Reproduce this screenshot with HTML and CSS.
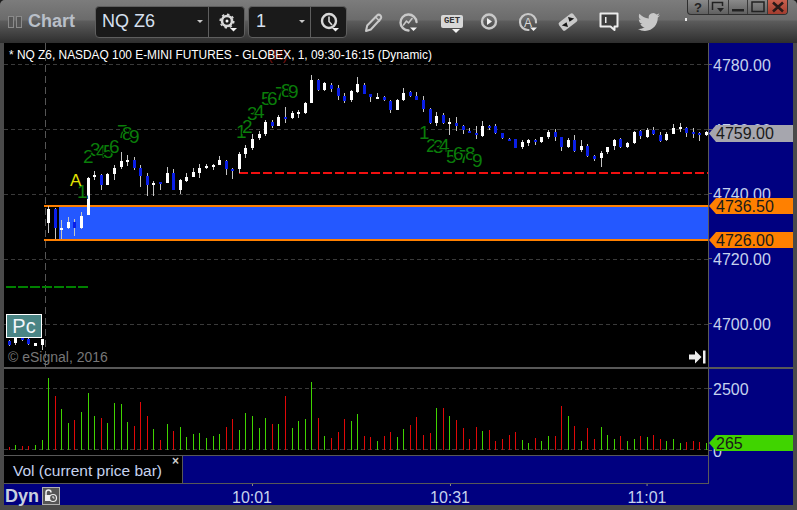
FILE: index.html
```html
<!DOCTYPE html>
<html lang="en">
<head>
<meta charset="utf-8">
<title>Chart</title>
<link rel="stylesheet" href="styles.css">
</head>
<body>
<div class="window">
  <header class="toolbar">
    <span class="grip"><i></i><i></i></span>
    <span class="app-title">Chart</span>
    <div class="combo combo-symbol">
      <span class="combo-value">NQ Z6</span><span class="caret"></span>
      <span class="combo-btn">
        <svg width="24" height="24" viewBox="0 0 24 24"><circle class="ico-ring" cx="12" cy="11" r="5" stroke-width="2.600"/><circle class="ico-ring" cx="12" cy="11" r="6.800" stroke-width="1.500" stroke-dasharray="2.500 2.800"/><circle class="ico-fill" cx="12" cy="11" r="1.500"/><path class="ico-fill" d="M15 18h7l-3.500 3.500z"/></svg>
      </span>
    </div>
    <div class="combo combo-interval">
      <span class="combo-value">1</span><span class="caret"></span>
      <span class="combo-btn">
        <svg width="24" height="24" viewBox="0 0 24 24"><circle class="ico-ring" cx="12" cy="11" r="7" stroke-width="2.400"/><path class="ico-ring" d="M12 6.500V11.500L15 15" stroke-width="1.600"/><path class="ico-fill" d="M15 18h7l-3.500 3.500z"/></svg>
      </span>
    </div>
    <span class="tool t-pencil"><svg width="24" height="24" viewBox="0 0 24 24"><path class="ico-line" d="M5 21l1.200-5.500L16 5.500c1-1 2.500-1 3.500 0s1 2.500 0 3.500L9.800 19.500z" stroke-width="2"/><path class="ico-line" d="M14.500 7l4 4" stroke-width="1.500"/></svg></span>
    <span class="tool t-line"><svg width="24" height="24" viewBox="0 0 24 24"><path class="ico-line" d="M12.500 20.500A8 8 0 1 1 20.500 12" stroke-width="2.400"/><path class="ico-line" d="M7.500 15l3-4 2 2 3.500-4.500" stroke-width="1.600"/><path class="ico-fill" d="M14 17.500h7l-3.500 3.500z"/></svg></span>
    <span class="tool t-get"><span class="get-badge">GET</span><svg class="get-caret" width="8" height="4" viewBox="0 0 8 4"><path class="ico-fill" d="M0 0h8l-4 4z"/></svg></span>
    <span class="tool t-play"><svg width="24" height="24" viewBox="0 0 24 24"><circle class="ico-line" cx="12" cy="11.500" r="7" stroke-width="2.400"/><path class="ico-fill" d="M10 8l5 3.500-5 3.500z"/></svg></span>
    <span class="tool t-auto"><svg width="24" height="24" viewBox="0 0 24 24"><path class="ico-line" d="M12.500 20A8 8 0 1 1 20 12.500" stroke-width="2.200"/><text class="ico-a" x="12" y="16.500">A</text><path class="ico-fill" d="M14 17.500h7l-3.500 3.500z"/></svg></span>
    <span class="tool t-link"><svg width="24" height="24" viewBox="0 0 24 24"><rect class="ico-plate" x="3" y="7" width="18" height="10" rx="2" transform="rotate(-38 12 12)"/><path class="ico-dark" d="M5.800 15.500l4.700-3.300 1.500 4.800zM18.200 8.500l-4.700 3.300-1.500-4.800z"/></svg></span>
    <span class="tool t-note"><svg width="24" height="24" viewBox="0 0 24 24"><path class="ico-bubble" d="M3.500 3.500h17v13h-3v3.500l-4-3.500h-10z"/><rect class="ico-bar" x="8" y="7" width="1.500" height="6"/></svg></span>
    <span class="tool t-bird"><svg width="24" height="24" viewBox="0 0 24 24"><path class="ico-bird" d="M23.950 4.570a10 10 0 0 1-2.820.770 4.960 4.960 0 0 0 2.160-2.720c-.95.560-2 .960-3.120 1.180a4.920 4.920 0 0 0-8.380 4.480C7.690 8.100 4.070 6.130 1.640 3.160a4.820 4.820 0 0 0-.670 2.480c0 1.710.870 3.210 2.190 4.100a4.900 4.900 0 0 1-2.230-.620v.060c0 2.390 1.700 4.380 3.950 4.830a5 5 0 0 1-2.210.080 4.940 4.940 0 0 0 4.600 3.420A9.870 9.870 0 0 1 0 19.540a13.940 13.940 0 0 0 7.550 2.210c9.060 0 14-7.500 14-13.980 0-.210 0-.420-.020-.630a9.940 9.940 0 0 0 2.460-2.550z"/></svg></span>
    <span class="dot"></span>
    <div class="win-btns">
      <span class="win-btn win-help">?</span>
      <span class="win-btn"><svg width="14" height="12" viewBox="0 0 14 12"><path class="win-stroke" d="M1.500 9V1.500H11.500V5" stroke-width="1.500"/><path class="win-fill" d="M6 7h7l-3.500 4z"/></svg></span>
      <span class="win-btn"><svg width="14" height="12" viewBox="0 0 14 12"><rect class="win-fill" x="1" y="8" width="12" height="2.500"/></svg></span>
      <span class="win-btn"><svg width="14" height="12" viewBox="0 0 14 12"><rect class="win-stroke" x="1" y="1" width="12" height="9.500" stroke-width="1.500"/></svg></span>
      <span class="win-btn win-close"><svg width="14" height="12" viewBox="0 0 14 12"><path class="win-x" d="M2 1.500L12 10.500M12 1.500L2 10.500" stroke-width="2.600"/></svg></span>
    </div>
  </header>

  <main class="workspace">
    <section class="row row-price">
      <div class="pane">
        <svg id="priceChart" class="chart" width="704" height="324" viewBox="4 43 704 324"></svg>
        <span class="chart-note">(R)</span>
        <span class="chart-title">* NQ Z6, NASDAQ 100 E-MINI FUTURES - GLOBEX, 1, 09:30-16:15 (Dynamic)</span>
        <span class="pc-badge">Pc</span>
        <span class="copyright">© eSignal, 2016</span>
        <svg class="scroll-end" width="17" height="14" viewBox="0 0 17 14"><path class="ico-arrow" d="M0 4.500h6V0.500l6.500 6.500L6 13.500V9.500H0z"/><rect class="ico-arrow" x="14" y="0.500" width="2.500" height="13"/></svg>
      </div>
      <div class="axis">
        <span class="tick p4780">4780.00</span>
        <span class="tick p4760">4760.00</span>
        <span class="tick p4740">4740.00</span>
        <span class="tick p4720">4720.00</span>
        <span class="tick p4700">4700.00</span>
        <span class="tag tag-last">4759.00</span>
        <span class="tag tag-hi">4736.50</span>
        <span class="tag tag-lo">4726.00</span>
      </div>
    </section>
    <div class="divider"></div>
    <section class="row row-vol">
      <div class="pane">
        <svg id="volChart" class="chart" width="704" height="86" viewBox="4 369 704 86"></svg>
      </div>
      <div class="axis">
        <span class="tick v2500">2500</span>
        <span class="tick v0">0</span>
        <span class="tag tag-vol">265</span>
      </div>
    </section>
    <section class="legend-row">
      <div class="legend">
        <span class="legend-text">Vol (current price bar)</span>
        <span class="legend-close">×</span>
      </div>
      <div class="legend-fill"></div>
    </section>
    <section class="time-row">
      <div class="time-axis">
        <span class="dyn">Dyn</span>
        <span class="lock"><svg width="18" height="18" viewBox="0 0 18 18"><rect class="lock-box" x="0.500" y="0.500" width="17" height="17"/><path class="lock-arch" d="M4 8V5.500a2.500 2.500 0 0 1 5 0" stroke-width="1.500"/><rect class="lock-body" x="3" y="8" width="6" height="6"/><circle class="lock-clock" cx="11" cy="11" r="3.500" stroke-width="1.200"/><path class="lock-hand" d="M11 9v2h1.500" stroke-width="1"/></svg></span>
        <span class="time t1001">10:01</span>
        <span class="time t1031">10:31</span>
        <span class="time t1101">11:01</span>
      </div>
    </section>
  </main>
</div>
<script src="chart.js"></script>
</body>
</html>
```

FILE: styles.css
```css
* { box-sizing: border-box; }
html, body { margin: 0; padding: 0; background: #1c1c1c; }
body { width: 797px; height: 510px; overflow: hidden; font-family: "Liberation Sans", Arial, sans-serif; }

.window { width: 797px; height: 510px; display: flex; flex-direction: column; background: #4a4a4a; border-radius: 5px 5px 0 0; overflow: hidden; }

/* toolbar */
.toolbar { position: relative; height: 43px; flex: none; display: flex; align-items: center; background: linear-gradient(#7c7c7c 0, #6b6b6b 20px, #5c5c5c 21px, #2e2e2e 43px); }
.grip { display: flex; gap: 2px; margin-left: 8px; }
.grip i { display: block; width: 6px; height: 12px; border: 1px solid #8a8a8a; background: #555; }
.app-title { margin-left: 6px; width: 67px; font-size: 18px; font-weight: bold; color: #b9bfc8; }
.combo { height: 32px; display: flex; align-items: center; background: #1a1a1a; border: 1px solid #5e5e5e; border-radius: 4px; color: #d6e0f0; }
.combo-symbol { width: 150px; }
.combo-interval { width: 99px; margin-left: 3px; }
.combo-value { margin-left: 6px; font-size: 18px; flex: 1; }
.combo-interval .combo-value { margin-left: 7px; }
.caret { width: 0; height: 0; margin-right: 5px; border-left: 3px solid transparent; border-right: 3px solid transparent; border-top: 3px solid #c8c8c8; }
.combo-btn { width: 36px; height: 30px; display: flex; align-items: center; justify-content: center; border-left: 1px solid #5e5e5e; }
.tool { position: relative; width: 24px; height: 24px; flex: none; display: flex; align-items: center; justify-content: center; }
.t-pencil { margin-left: 14px; }
.t-line { margin-left: 11px; }
.t-get { margin-left: 20px; flex-direction: column; }
.t-play { margin-left: 13px; }
.t-auto { margin-left: 15px; }
.t-link { margin-left: 16px; }
.t-note { margin-left: 17px; }
.t-bird { margin-left: 16px; }
.get-badge { width: 22px; height: 13px; background: #d8d8d8; border-radius: 2px; color: #333; font: bold 9px/13px "Liberation Mono", monospace; text-align: center; }
.get-caret { display: block; margin: 1px 0 -5px 8px; }
.ico-ring, .ico-line { fill: none; stroke: #d8d8d8; }
.ico-line { stroke: #c9c9c9; stroke-linecap: round; stroke-linejoin: round; }
.ico-fill { fill: #f2f2f2; }
.ico-a { fill: #d8d8d8; font-size: 12px; text-anchor: middle; }
.ico-plate { fill: #c9c9c9; }
.ico-dark { fill: #151515; }
.ico-bubble { fill: #3e3e3e; stroke: #ececec; stroke-width: 2; stroke-linejoin: round; }
.ico-bar { fill: #ececec; }
.ico-bird { fill: #c8c8c8; transform: scale(0.92); transform-origin: center; }
.dot { position: absolute; left: 685px; top: 18px; width: 2px; height: 3px; background: #eee; }
.win-btns { position: absolute; top: 0; left: 687px; width: 101px; height: 15px; display: flex; border: 1px solid #2e2e2e; border-top: 0; border-radius: 0 0 4px 4px; overflow: hidden; background: linear-gradient(#8a8a8a, #606060); }
.win-btn { width: 20px; display: flex; align-items: center; justify-content: center; border-left: 1px solid #3a3a3a; font-size: 13px; font-weight: bold; color: #222; }
.win-btn:first-child { border-left: 0; }
.win-close { background: linear-gradient(#c9604e, #a23c2e); }
.win-stroke { fill: none; stroke: #222; }
.win-fill { fill: #222; }
.win-x { stroke: #2a1a18; fill: none; }

/* workspace */
.workspace { flex: none; height: 462px; margin: 0 4px; background: #000080; display: flex; flex-direction: column; }
.row { display: flex; flex: none; }
.row-price { height: 324px; }
.row-vol { height: 86px; }
.pane { position: relative; width: 704px; flex: none; background: #000; }
.chart { display: block; shape-rendering: crispEdges; }
.axis { position: relative; flex: 1; border-left: 1px solid #5a5a5a; color: #c6d2ee; font-size: 16px; line-height: 18px; }
.divider { height: 2px; flex: none; background: #585858; }

.chart-title { position: absolute; left: 5px; top: 5px; font-size: 11.900px; line-height: 15px; color: #fff; white-space: nowrap; }
.chart-note { position: absolute; left: 264px; top: 4px; font-size: 14px; line-height: 16px; color: #7a1010; }
.pc-badge { position: absolute; left: 2px; top: 271px; width: 36px; height: 24px; background: #4a8585; border: 1px solid #fff; color: #f2f6fa; font-size: 20px; line-height: 22px; text-align: center; }
.copyright { position: absolute; left: 4px; top: 306px; font-size: 14px; line-height: 16px; color: #777; }
.scroll-end { position: absolute; left: 685px; top: 307px; }
.ico-arrow { fill: #eee; }

.tick { position: absolute; left: 4px; white-space: nowrap; }
.tick::before { content: ""; position: absolute; left: -4px; top: 7px; width: 3px; height: 1px; background: #666; }
.p4780 { top: 14px; }
.p4760 { top: 79px; }
.p4740 { top: 143px; }
.p4720 { top: 208px; }
.p4700 { top: 273px; }
.v2500 { top: 12px; }
.v0 { top: 74px; }
.tag { position: absolute; left: 0; width: 84px; height: 16px; padding-left: 7px; line-height: 18px; color: #1a1a1a; clip-path: polygon(0 50%, 7px 0, 100% 0, 100% 100%, 7px 100%); }
.tag-last { top: 82px; height: 17px; background: #a6a6ae; }
.tag-hi { top: 155px; background: #ff8000; }
.tag-lo { top: 189px; background: #ff8000; }
.tag-vol { top: 66px; background: #40d400; }

/* legend and time */
.legend-row { display: flex; flex: none; height: 29px; width: 705px; border-top: 1px solid #585858; border-bottom: 1px solid #585858; border-right: 1px solid #5a5a5a; }
.legend { width: 178px; flex: none; display: flex; justify-content: space-between; background: #000; color: #c6d2ee; }
.legend-text { margin: 6px 0 0 9px; font-size: 15.500px; line-height: 18px; white-space: nowrap; }
.legend-close { margin: 0 3px 0 0; font-size: 12px; font-weight: bold; line-height: 11px; color: #ccc; }
.legend-fill { flex: 1; border-left: 1px solid #585858; }
.time-row { flex: 1; display: flex; }
.time-axis { position: relative; width: 704px; display: flex; align-items: center; color: #c6d2ee; }
.dyn { margin: 2px 0 0 1px; font-size: 18px; font-weight: bold; color: #c8d0de; }
.lock { margin-left: 3px; height: 18px; display: block; }
.lock-box { fill: #555; stroke: #b0b0b0; }
.lock-arch { fill: none; stroke: #eee; }
.lock-body { fill: #eee; }
.lock-clock { fill: #555; stroke: #eee; }
.lock-hand { fill: none; stroke: #eee; }
.time { position: absolute; top: 5px; font-size: 16px; line-height: 18px; transform: translateX(-50%); }
.time::before { content: ""; position: absolute; left: 50%; top: -5px; width: 1px; height: 2px; background: #888; }
.t1001 { left: 248px; }
.t1031 { left: 446px; }
.t1101 { left: 643px; }

/* chart drawing */
.grid { stroke: #3a3a3a; stroke-width: 1; stroke-dasharray: 4 3; fill: none; }
.vgrid { stroke: #555; stroke-width: 1; stroke-dasharray: 7 4; fill: none; }
.band { fill: #2458ff; }
.band-edge { fill: #ff8000; }
.red-dash { stroke: #f01010; stroke-width: 2; stroke-dasharray: 9 3; fill: none; }
.green-dash { stroke: #008000; stroke-width: 2; stroke-dasharray: 10 2; fill: none; }
.wick { fill: #c4c4c4; }
.up { fill: #fff; }
.down { fill: #0a1ee6; }
.vol-up { fill: #40d400; }
.vol-down { fill: #e00808; }
.td { fill: #0a7d0a; font-size: 19px; shape-rendering: auto; paint-order: stroke; stroke: #000; stroke-width: 2px; }
.sig { fill: #e2e200; font-size: 17px; stroke: none; }
```

FILE: chart.js
```js
var NS = "http://www.w3.org/2000/svg";
function el(parent, name, attrs, text) {
  var n = document.createElementNS(NS, name);
  for (var k in attrs) n.setAttribute(k, attrs[k]);
  if (text) n.textContent = text;
  parent.appendChild(n);
  return n;
}
function barX(i) { return Math.floor(9.2 + 6.577 * i); }

// wick top, body top, body bottom, wick bottom, 1 = white / 0 = blue
var bars = [
[340,341,345,346,0],[334,336,343,345,1],[335,336,340,341,0],[338,339,344,345,0],[343,343,346,346,1],[339,339,345,350,1],
[206,209,223,233,1],[208,209,228,239,0],[220,228,230,239,1],[217,222,228,229,1],[219,222,228,236,0],[212,216,228,229,1],
[177,178,215,215,1],[171,175,177,180,1],[174,175,185,190,0],[173,174,185,185,1],[165,168,174,180,1],[152,161,167,169,1],
[155,160,162,166,1],[157,160,168,170,0],[165,168,176,187,0],[173,176,185,196,0],[181,183,185,196,1],[182,182,184,190,0],
[167,173,183,183,1],[169,173,190,190,0],[179,180,190,194,1],[173,177,181,182,1],[168,172,177,177,1],[164,168,173,178,1],
[164,166,168,169,1],[164,165,167,170,1],[156,160,165,165,1],[160,161,169,175,0],[168,169,171,179,0],[152,154,169,173,1],
[145,148,154,158,1],[134,139,148,150,1],[131,134,138,140,1],[120,122,134,136,1],[120,122,126,128,0],[115,117,126,126,1],
[107,117,119,123,0],[111,113,118,119,1],[110,112,114,118,1],[102,103,113,114,1],[75,80,103,103,1],[79,80,90,91,0],
[82,83,90,91,1],[83,85,89,92,0],[85,88,96,100,0],[93,96,101,103,0],[90,91,100,102,1],[77,84,92,93,1],
[83,85,94,94,0],[94,94,97,102,0],[93,97,99,99,1],[96,97,100,101,0],[100,101,110,113,0],[99,100,110,110,1],
[88,93,100,101,1],[91,92,96,97,0],[92,96,100,100,0],[96,100,109,112,0],[108,109,123,124,0],[112,116,123,126,1],
[113,115,123,124,0],[118,122,124,135,1],[117,123,126,131,0],[125,126,130,134,0],[128,131,133,133,0],[126,133,135,139,0],
[121,126,136,137,1],[125,126,128,130,0],[124,126,133,134,0],[133,133,138,139,0],[138,139,141,141,0],[139,139,148,148,0],
[140,142,147,149,1],[139,140,143,146,1],[139,140,142,145,0],[137,137,142,143,1],[130,132,137,139,1],[129,132,137,141,0],
[137,137,147,151,0],[138,140,147,148,1],[135,140,151,152,0],[140,146,150,152,1],[144,146,156,157,0],[155,156,159,161,0],
[151,153,158,167,1],[147,147,152,154,1],[139,140,146,150,1],[138,139,147,148,0],[142,143,147,148,1],[131,132,143,144,1],
[130,131,136,139,0],[128,130,137,138,1],[127,130,134,135,0],[132,135,141,142,0],[132,134,140,141,1],[124,128,134,134,1],
[123,127,129,132,1],[127,128,133,137,0],[128,132,134,138,0],[132,133,135,141,0],[131,132,135,136,1]
];

// top of each volume bar; negative = down bar
var vols = [
-447,445,-446,-446,445,440,378,-396,409,423,-420,412,393,416,-418,423,403,404,422,-426,-402,-416,429,-440,424,-431,427,437,434,433,438,436,434,-427,-419,430,413,416,428,418,
-424,424,-396,428,421,419,382,-418,436,-438,-432,-419,421,414,-436,-437,441,-436,-432,437,429,-425,-417,-435,-433,408,-408,416,-420,-428,-439,-427,431,-430,-441,-439,-435,-432,440,443,-438,
441,436,-436,-406,416,-426,441,-428,-439,427,435,439,-436,441,439,-436,437,-435,-439,441,439,443,-442,-441,-442,443
];

// Sequence counts: digit, x, baseline
var counts = [
["1",77,198],["2",83,163],["3",90,156],["4",96,158],["5",103,158],["6",109,153],["7",117,138],["8",122,140],["9",129,143],
["1",236,138],["2",242,133],["3",247,120],["4",254,118],["5",261,105],["6",267,105],["7",275,100],["8",281,97],["9",288,98],
["1",419,139],["2",426,152],["3",433,153],["4",439,152],["5",446,163],["6",453,160],["7",459,163],["8",465,160],["9",472,167]
];

var price = document.getElementById("priceChart");
[64, 129, 194, 259, 324].forEach(function (y) {
  el(price, "line", { "class": "grid", x1: 4, y1: y + 0.5, x2: 708, y2: y + 0.5 });
});
el(price, "line", { "class": "vgrid", x1: 45.5, y1: 43, x2: 45.5, y2: 367 });
el(price, "rect", { "class": "band", x: 59, y: 207, width: 649, height: 32 });
el(price, "rect", { "class": "band-edge", x: 44, y: 205, width: 664, height: 2 });
el(price, "rect", { "class": "band-edge", x: 44, y: 239, width: 664, height: 2 });
el(price, "line", { "class": "red-dash", x1: 239, y1: 173, x2: 708, y2: 173 });
el(price, "line", { "class": "green-dash", x1: 6, y1: 287, x2: 88, y2: 287 });

bars.forEach(function (b, i) {
  var x = barX(i);
  el(price, "rect", { "class": "wick", x: x, y: b[0], width: 1, height: b[3] - b[0] });
  el(price, "rect", { "class": b[4] ? "up" : "down", x: x - 1, y: b[1], width: 3, height: Math.max(b[2] - b[1], 2) });
});
counts.forEach(function (c) {
  el(price, "text", { "class": "td", x: c[1], y: c[2] }, c[0]);
});
el(price, "text", { "class": "td sig", x: 70, y: 186 }, "A");

var vol = document.getElementById("volChart");
[388, 449].forEach(function (y) {
  el(vol, "line", { "class": "grid", x1: 4, y1: y + 0.5, x2: 708, y2: y + 0.5 });
});
vols.forEach(function (v, i) {
  var top = Math.abs(v);
  el(vol, "rect", { "class": v < 0 ? "vol-down" : "vol-up", x: barX(i), y: top, width: 1, height: 450 - top });
});
```
